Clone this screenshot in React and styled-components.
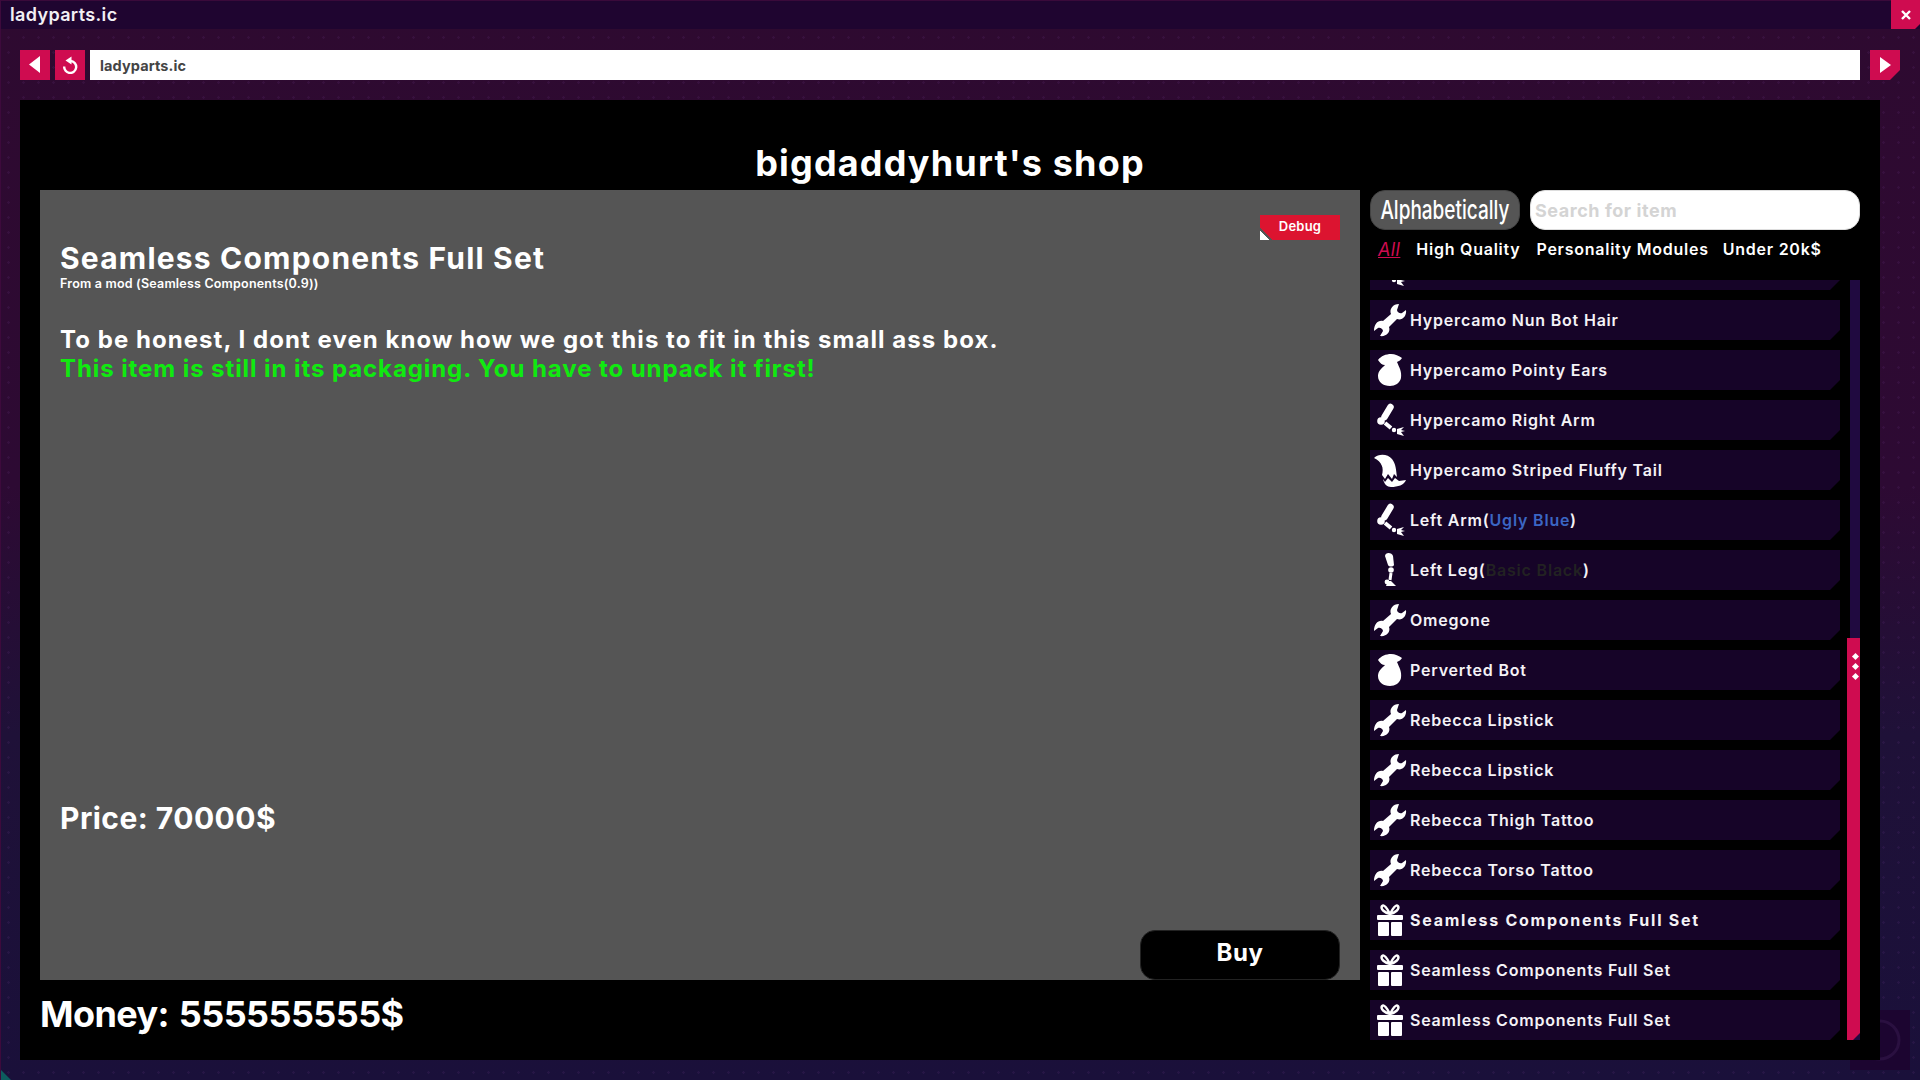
import React from 'react';
import styled, { createGlobalStyle } from 'styled-components';

const GlobalStyle = createGlobalStyle`
  html, body {
    margin: 0;
    padding: 0;
    background: #1a103a;
  }
  * {
    box-sizing: border-box;
  }
`;

const Window = styled.div`
  position: relative;
  width: 1920px;
  height: 1080px;
  overflow: hidden;
  font-family: Inter, 'Noto Sans', sans-serif;
  color: #fff;
  background-color: #2a0a32;
  background-image:
    radial-gradient(circle, rgba(120, 60, 150, 0.13) 1px, transparent 1.5px),
    linear-gradient(180deg, #2e0a30 0%, #2d0a33 45%, #1f1138 68%, #1a103a 100%);
  background-size: 15px 15px, 100% 100%;
  border-left: 1px solid #3d0a3c;
  &::after {
    content: '';
    position: absolute;
    left: 0;
    bottom: 0;
    width: 10px;
    height: 10px;
    background: #0d5c5e;
    clip-path: polygon(0 0, 100% 100%, 0 100%);
  }
`;

const TitleBar = styled.header`
  height: 29px;
  background: #1f0530;
  border-top: 1px solid #3a0a3a;
  display: flex;
  align-items: center;
  justify-content: space-between;
`;

const TitleText = styled.span`
  margin-left: 9px;
  margin-top: -2px;
  font-size: 18px;
  font-weight: 600;
  letter-spacing: 0.35px;
  color: #f2f0f4;
`;

const CloseButton = styled.button`
  width: 29px;
  height: 29px;
  margin-top: -1px;
  border: 0;
  padding: 0;
  display: flex;
  align-items: center;
  justify-content: center;
  background: #cf0c50;
  clip-path: polygon(0 0, 100% 0, 100% calc(100% - 5px), calc(100% - 5px) 100%, 0 100%);
`;

const NavBar = styled.nav`
  height: 30px;
  margin: 21px 20px 20px 19px;
  display: flex;
  gap: 5px;
`;

const NavButton = styled.button`
  width: 30px;
  height: 30px;
  flex: none;
  border: 0;
  padding: 0;
  display: flex;
  align-items: center;
  justify-content: center;
  background: #cf0c50;
  clip-path: ${(p) =>
    p.$cut
      ? 'polygon(0 0, 100% 0, 100% calc(100% - 10px), calc(100% - 10px) 100%, 0 100%)'
      : 'none'};
`;

const UrlBar = styled.div`
  flex: 1;
  margin-right: 5px;
  background: #fff;
  color: #444;
  font-size: 14.5px;
  font-weight: 700;
  letter-spacing: 0.1px;
  line-height: 31px;
  padding-left: 10px;
`;

const Panel = styled.main`
  width: 1860px;
  height: 960px;
  margin-left: 19px;
  padding: 0 20px;
  background: #000;
  position: relative;
  z-index: 1;
`;

const ShopTitle = styled.h1`
  height: 90px;
  margin: 0;
  padding-top: 41px;
  text-align: center;
  font-size: 36px;
  line-height: 44px;
  font-weight: 700;
  letter-spacing: 1.15px;
`;

const Columns = styled.div`
  display: flex;
  gap: 10px;
`;

const LeftColumn = styled.div`
  width: 1320px;
  flex: none;
`;

const DetailCard = styled.section`
  position: relative;
  height: 790px;
  padding: 50px 20px 0;
  background: #555;
  display: flex;
  flex-direction: column;
`;

const DebugBadge = styled.div`
  position: absolute;
  top: 25px;
  right: 20px;
  width: 80px;
  height: 25px;
  font-size: 13px;
  font-weight: 600;
  line-height: 23px;
  letter-spacing: 0.2px;
  text-align: center;
  background: linear-gradient(45deg, #fff 7px, #555 7px, #555 9px, #dc1430 9px);
`;

const ItemName = styled.h2`
  margin: 0;
  font-size: 30px;
  line-height: 36px;
  font-weight: 700;
  letter-spacing: 1.2px;
`;

const ModSource = styled.div`
  margin-top: 0;
  font-size: 12.5px;
  line-height: 16px;
  font-weight: 600;
  letter-spacing: 0.2px;
`;

const Description = styled.p`
  margin: 33px 0 0;
  font-size: 24px;
  line-height: 29px;
  font-weight: 700;
  letter-spacing: 1.05px;
`;

const GreenNote = styled.span`
  display: block;
  color: #10ea10;
  letter-spacing: 0.92px;
`;

const Price = styled.div`
  margin-top: auto;
  font-size: 30px;
  line-height: 36px;
  font-weight: 700;
  letter-spacing: 0.45px;
`;

const BuyButton = styled.button`
  align-self: flex-end;
  width: 200px;
  height: 50px;
  margin-top: 94px;
  padding: 0 0 5px;
  border: 1px solid #222;
  border-radius: 15px;
  background: #000;
  color: #fff;
  font-family: inherit;
  font-size: 24px;
  font-weight: 700;
  letter-spacing: 0.6px;
`;

const MoneyRow = styled.div`
  height: 80px;
  padding-top: 11px;
  font-size: 36px;
  line-height: 46px;
  font-weight: 700;
  letter-spacing: -0.6px;
  word-spacing: 2px;
`;

const RightColumn = styled.aside`
  width: 490px;
  flex: none;
`;

const SortRow = styled.div`
  height: 40px;
  display: flex;
  gap: 10px;
`;

const SortButton = styled.button`
  width: 150px;
  flex: none;
  border: 1px solid #444;
  border-radius: 15px;
  background: #555;
  color: #fff;
  padding: 0;
  font-family: inherit;
  font-size: 20px;
  font-weight: 500;
  white-space: nowrap;
  overflow: hidden;
`;

const SortLabel = styled.span`
  display: inline-block;
  transform: scale(0.95, 1.3);
`;

const SearchBox = styled.div`
  flex: 1;
  background: #fff;
  border: 1px solid #ddd;
  border-radius: 15px;
  padding-left: 4px;
  color: #d4d4d4;
  font-size: 18px;
  font-weight: 700;
  letter-spacing: 0.55px;
  line-height: 40px;
`;

const Tabs = styled.div`
  height: 50px;
  padding-top: 8px;
  display: flex;
  align-items: flex-start;
`;

const Tab = styled.span`
  font-size: 16px;
  line-height: 22px;
  font-weight: 600;
  letter-spacing: 0.75px;
  margin-left: ${(p) => p.$left}px;
  ${(p) =>
    p.$active &&
    `
    font-size: 18px;
    font-style: italic;
    font-weight: 400;
    color: #cf0c50;
    text-decoration: underline;
    margin-top: 1px;
    letter-spacing: 0.4px;
  `}
`;

const ListArea = styled.div`
  position: relative;
  height: 760px;
  overflow: hidden;
`;

const ListInner = styled.div`
  width: 470px;
  margin-top: -30px;
  display: flex;
  flex-direction: column;
  gap: 10px;
`;

const Row = styled.div`
  height: 40px;
  flex: none;
  display: flex;
  align-items: center;
  padding-left: 3px;
  background: #160428;
  clip-path: polygon(0 0, 100% 0, 100% calc(100% - 10px), calc(100% - 10px) 100%, 0 100%);
`;

const RowIcon = styled.svg`
  width: 34px;
  height: 34px;
  flex: none;
  fill: #fff;
`;

const RowLabel = styled.span`
  margin-left: 3px;
  font-size: 16px;
  font-weight: ${(p) => (p.$selected ? 700 : 600)};
  letter-spacing: ${(p) => (p.$selected ? '1.75px' : '0.8px')};
  color: #f4f2f6;
  white-space: nowrap;
`;

const Tint = styled.span`
  color: ${(p) => p.$color};
`;

const ScrollTrack = styled.div`
  position: absolute;
  top: 0;
  right: 0;
  width: 10px;
  height: 760px;
  background: #200a40;
`;

const ScrollThumb = styled.div`
  position: absolute;
  top: 358px;
  right: -3px;
  width: 16px;
  height: 402px;
  padding-top: 15px;
  background: #cf0c50;
  display: flex;
  flex-direction: column;
  align-items: center;
  gap: 3px;
  clip-path: polygon(0 0, 100% 0, 100% calc(100% - 10px), calc(100% - 10px) 100%, 0 100%);
`;

const ThumbDot = styled.i`
  width: 5px;
  height: 5px;
  margin: 1px 0;
  background: #fff;
  transform: rotate(45deg);
`;

const PowerButton = styled.div`
  position: absolute;
  left: 1849px;
  top: 1010px;
  width: 60px;
  height: 60px;
  background: #1c0530;
  display: flex;
  align-items: center;
  justify-content: center;
`;

function WrenchIcon() {
  return (
    <RowIcon viewBox="0 0 34 34">
      <path d="M26 1 C20 1 16 6 18 11 L10 18 C5 17 1 21 1 28 L5 25 C7 24 10 26 10 28 L7 33 C13 34 18 29 16 24 L24 16 C29 18 34 13 33 7 L29 10 C27 11 24 9 24 7 Z" />
    </RowIcon>
  );
}

function SackIcon() {
  return (
    <RowIcon viewBox="0 0 34 34">
      <path d="M5 7 C8 3 13 1 18 1 C22 1 26 3 29 5 C28 7 26 8 24 9 C26 14 29 18 28 25 C27 30 22 33 17 33 C10 33 5 29 5 23 C5 18 9 15 12 12 C9 12 7 10 5 7 Z" />
    </RowIcon>
  );
}

function ArmIcon() {
  return (
    <RowIcon viewBox="0 0 34 34">
      <path d="M17.5 4 L11.5 14" stroke="#fff" strokeWidth="6.5" strokeLinecap="round" />
      <circle cx="8" cy="18" r="3.8" />
      <path d="M12 20 L18 25" stroke="#fff" strokeWidth="4" />
      <circle cx="21" cy="27" r="2.2" />
      <path d="M24 26 L31 24 L28 27 L32 28 L28 29 L31 33 L24 31 Z" />
    </RowIcon>
  );
}

function TailIcon() {
  return (
    <RowIcon viewBox="0 0 34 34">
      <path d="M1 5 C6 0 15 1 19 6 C23 11 23 17 24 24 L21 21 L19 26 L15 21 L12 26 L9 22 C11 15 9 9 1 5 Z" />
      <path d="M10 26 L12 29 L15 25 L19 29 L22 25 L26 28 L33 27 C31 32 25 34 18 34 C14 34 11 31 10 26 Z" />
    </RowIcon>
  );
}

function LegIcon() {
  return (
    <RowIcon viewBox="0 0 34 34">
      <path d="M12 3 C12 -1 19 -1 20 3 L21 12 C20 14 16 14 15 12 Z" />
      <circle cx="18" cy="17" r="2.8" />
      <path d="M18 20 L17 27" stroke="#fff" strokeWidth="3" />
      <circle cx="14" cy="29" r="2.4" />
      <path d="M15 28 L18 28 L23 33 L13 33 Z" />
    </RowIcon>
  );
}

function GiftIcon() {
  return (
    <RowIcon viewBox="0 0 34 34">
      <rect x="4" y="12" width="26" height="5" rx="1" />
      <rect x="5" y="19" width="11" height="14" rx="1" />
      <rect x="18" y="19" width="11" height="14" rx="1" />
      <path
        d="M17 11 C14 5 11 1 9 3 C7 6 12 10 17 11 C22 10 27 6 25 3 C23 1 20 5 17 11 Z"
        fill="none"
        stroke="#fff"
        strokeWidth="2.4"
      />
    </RowIcon>
  );
}

const icons = {
  wrench: WrenchIcon,
  sack: SackIcon,
  arm: ArmIcon,
  tail: TailIcon,
  leg: LegIcon,
  gift: GiftIcon,
};

// first row is scrolled almost out of view, only its icon tip shows
const items = [
  { icon: 'arm', label: '' },
  { icon: 'wrench', label: 'Hypercamo Nun Bot Hair' },
  { icon: 'sack', label: 'Hypercamo Pointy Ears' },
  { icon: 'arm', label: 'Hypercamo Right Arm' },
  { icon: 'tail', label: 'Hypercamo Striped Fluffy Tail' },
  { icon: 'arm', label: 'Left Arm(', tint: 'Ugly Blue', color: '#3b66c4', tail: ')' },
  { icon: 'leg', label: 'Left Leg(', tint: 'Basic Black', color: '#222', tail: ')' },
  { icon: 'wrench', label: 'Omegone' },
  { icon: 'sack', label: 'Perverted Bot' },
  { icon: 'wrench', label: 'Rebecca Lipstick' },
  { icon: 'wrench', label: 'Rebecca Lipstick' },
  { icon: 'wrench', label: 'Rebecca Thigh Tattoo' },
  { icon: 'wrench', label: 'Rebecca Torso Tattoo' },
  { icon: 'gift', label: 'Seamless Components Full Set', selected: true },
  { icon: 'gift', label: 'Seamless Components Full Set' },
  { icon: 'gift', label: 'Seamless Components Full Set' },
];

export default function App() {
  return (
    <>
      <GlobalStyle />
      <Window>
        <TitleBar>
          <TitleText>ladyparts.ic</TitleText>
          <CloseButton aria-label="close">
            <svg width="10" height="10" viewBox="0 0 10 10">
              <path d="M1 1 L9 9 M9 1 L1 9" stroke="#fff" strokeWidth="2.4" />
            </svg>
          </CloseButton>
        </TitleBar>
        <NavBar>
          <NavButton aria-label="back">
            <svg width="14" height="18" viewBox="0 0 14 18">
              <path d="M12 0 V17 L1 8.5 Z" fill="#fff" />
            </svg>
          </NavButton>
          <NavButton aria-label="reload">
            <svg width="16" height="18" viewBox="0 0 16 18">
              <path
                d="M9 5 A6 6 0 1 1 2.2 10.5"
                fill="none"
                stroke="#fff"
                strokeWidth="2.4"
              />
              <path d="M9.5 0.5 V8.5 L3.5 4.5 Z" fill="#fff" />
            </svg>
          </NavButton>
          <UrlBar>ladyparts.ic</UrlBar>
          <NavButton $cut aria-label="forward">
            <svg width="14" height="18" viewBox="0 0 14 18">
              <path d="M2 1 V17 L13 9 Z" fill="#fff" />
            </svg>
          </NavButton>
        </NavBar>
        <Panel>
          <ShopTitle>bigdaddyhurt's shop</ShopTitle>
          <Columns>
            <LeftColumn>
              <DetailCard>
                <DebugBadge>Debug</DebugBadge>
                <ItemName>Seamless Components Full Set</ItemName>
                <ModSource>From a mod (Seamless Components(0.9))</ModSource>
                <Description>
                  To be honest, I dont even know how we got this to fit in this small ass box.
                  <GreenNote>This item is still in its packaging. You have to unpack it first!</GreenNote>
                </Description>
                <Price>Price: 70000$</Price>
                <BuyButton>Buy</BuyButton>
              </DetailCard>
              <MoneyRow>Money: 555555555$</MoneyRow>
            </LeftColumn>
            <RightColumn>
              <SortRow>
                <SortButton>
                  <SortLabel>Alphabetically</SortLabel>
                </SortButton>
                <SearchBox>Search for item</SearchBox>
              </SortRow>
              <Tabs>
                <Tab $active $left={8}>All</Tab>
                <Tab $left={16}>High Quality</Tab>
                <Tab $left={16}>Personality Modules</Tab>
                <Tab $left={14}>Under 20k$</Tab>
              </Tabs>
              <ListArea>
                <ListInner>
                  {items.map((item, i) => {
                    const Icon = icons[item.icon];
                    return (
                      <Row key={i}>
                        <Icon />
                        <RowLabel $selected={item.selected}>
                          {item.label}
                          {item.tint && <Tint $color={item.color}>{item.tint}</Tint>}
                          {item.tail}
                        </RowLabel>
                      </Row>
                    );
                  })}
                </ListInner>
                <ScrollTrack>
                  <ScrollThumb>
                    <ThumbDot />
                    <ThumbDot />
                    <ThumbDot />
                  </ScrollThumb>
                </ScrollTrack>
              </ListArea>
            </RightColumn>
          </Columns>
        </Panel>
        <PowerButton>
          <svg width="44" height="44" viewBox="0 0 44 44">
            <circle cx="22" cy="22" r="19" fill="none" stroke="#2a1040" strokeWidth="3" />
          </svg>
        </PowerButton>
      </Window>
    </>
  );
}
